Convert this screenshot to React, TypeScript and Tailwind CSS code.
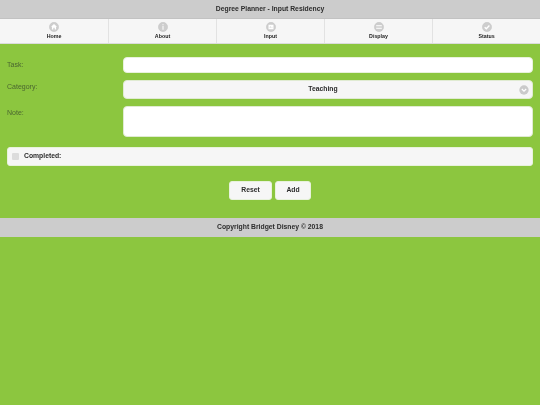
import type { ReactNode } from 'react'

function Icon({ children }: { children: ReactNode }) {
  return (
    <svg viewBox="0 0 12 12" className="w-[10px] h-[10px]">
      <circle cx="6" cy="6" r="5.6" fill="#cdcdcd" stroke="#bdbdbd" strokeWidth="0.4" />
      {children}
    </svg>
  )
}

const navItems = [
  { label: 'Home', icon: <path d="M6 2.4 L9.6 5.8 H8.5 V9 H6.8 V7 H5.2 V9 H3.5 V5.8 H2.4 Z" fill="#fff" /> },
  { label: 'About', icon: <path d="M5.4 2.6 H6.6 V3.8 H5.4 Z M5.4 4.8 H6.6 V9.2 H5.4 Z" fill="#fff" /> },
  { label: 'Input', icon: <path d="M3 3.4 H9 V8.6 H3 Z M4 6.6 L5.2 5.2 L6.4 6.6 L7.2 5.8 L8 6.6 Z" fill="#fff" fillRule="evenodd" /> },
  { label: 'Display', icon: <path d="M2.6 3.8 H9.4 V5.2 H2.6 Z M2.6 6.8 H9.4 V8.2 H2.6 Z" fill="#fff" /> },
  { label: 'Status', icon: <path d="M3.2 6.2 L5.2 8.2 L8.9 4.3" fill="none" stroke="#fff" strokeWidth="1.6" /> },
]

export default function App() {
  return (
    <div className="min-h-[405px] bg-[#8cc63f] font-['Liberation_Sans',Arial,sans-serif] blur-[0.25px]">
      <header className="h-[19px] bg-[#cccccc] border-b border-[#c2c2c2] flex items-center justify-center pt-[1px] text-[6.8px] font-bold text-[#2c2c2c]">
        Degree Planner - Input Residency
      </header>
      <nav className="h-[25px] grid grid-cols-5 bg-[#f6f6f6] border-b border-[#dcdcdc]">
        {navItems.map((item, i) => (
          <div key={item.label} className={`flex flex-col items-center pt-[3px] ${i > 0 ? 'border-l border-[#e2e2e2]' : ''}`}>
            <Icon>{item.icon}</Icon>
            <span className="text-[5.3px] leading-[7px] mt-[1px] font-bold text-[#222]">{item.label}</span>
          </div>
        ))}
      </nav>

      <main className="px-[7px] pt-[13px]">
        <div className="flex">
          <label className="w-[116px] pt-[3px] text-[7px] leading-[9px] text-[#4a6530]">Task:</label>
          <div className="flex-1 h-[16px] bg-white rounded-[4px] border border-[#e8f2dc]" />
        </div>
        <div className="flex mt-[7px]">
          <label className="w-[116px] pt-[2px] text-[7px] leading-[9px] text-[#4a6530]">Category:</label>
          <div className="flex-1 h-[19px] bg-[#f6f6f6] rounded-[4px] border border-[#e0ebd2] flex items-center relative pr-[10px]">
            <span className="w-full text-center text-[6.8px] font-bold text-[#2c2c2c]">Teaching</span>
            <svg viewBox="0 0 12 12" className="absolute right-[3px] top-[3.5px] w-[10px] h-[10px]">
              <circle cx="6" cy="6" r="5.6" fill="#cacaca" />
              <path d="M3.4 4.8 L6 7.4 L8.6 4.8" fill="none" stroke="#fff" strokeWidth="1.5" />
            </svg>
          </div>
        </div>
        <div className="flex mt-[7px]">
          <label className="w-[116px] pt-[2px] text-[7px] leading-[9px] text-[#4a6530]">Note:</label>
          <div className="flex-1 h-[31px] bg-white rounded-[4px] border border-[#e0ebd2]" />
        </div>
        <div className="mt-[10px] h-[19px] bg-[#f6f6f6] rounded-[3px] border border-[#e8f2dc] flex items-center pl-[4px] gap-[5px]">
          <span className="w-[7px] h-[7px] bg-[#dcdcdc] rounded-[1px]" />
          <span className="text-[6.8px] font-bold text-[#2c2c2c]">Completed:</span>
        </div>
        <div className="mt-[15px] flex justify-center gap-[3px]">
          <button className="w-[43px] h-[19px] bg-[#f6f6f6] rounded-[3px] border border-[#e8f2dc] text-[6.8px] font-bold text-[#2c2c2c]">Reset</button>
          <button className="w-[36px] h-[19px] bg-[#f6f6f6] rounded-[3px] border border-[#e8f2dc] text-[6.8px] font-bold text-[#2c2c2c]">Add</button>
        </div>
      </main>

      <footer className="mt-[18px] h-[19px] bg-[#cccccc] flex items-center justify-center text-[6.8px] font-bold text-[#2c2c2c]">
        Copyright Bridget Disney © 2018
      </footer>
    </div>
  )
}
